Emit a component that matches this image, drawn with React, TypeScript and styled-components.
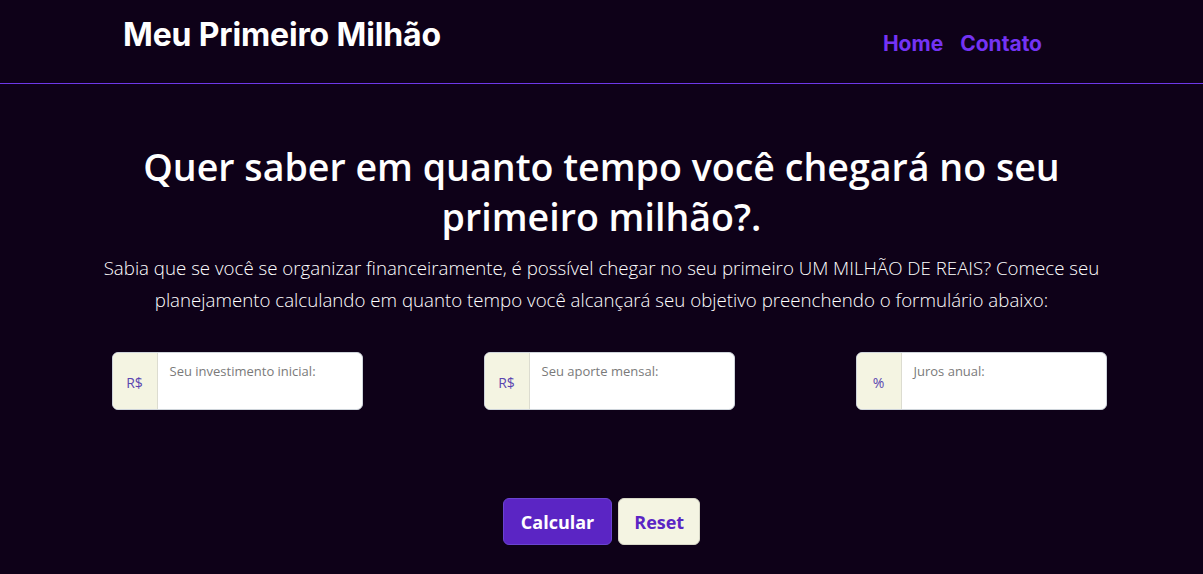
import React from "react";
import styled, { createGlobalStyle } from "styled-components";

const Global = createGlobalStyle`
  html, body { margin: 0; padding: 0; background: #0e0118; }
  * { box-sizing: border-box; }
`;

const Page = styled.div`
  min-height: 574px;
  background: #0e0118;
  font-family: "Open Sans", "Noto Sans", sans-serif;
  color: #fff;
`;

const Header = styled.header`
  height: 84px;
  border-bottom: 1px solid #6d38e8;
  display: flex;
  justify-content: space-between;
  align-items: flex-start;
  padding: 0 161px 0 123px;
`;

const Brand = styled.h1`
  margin: 0;
  padding-top: 17px;
  font-family: Inter, "Liberation Sans", sans-serif;
  font-size: 32px;
  font-weight: 700;
  letter-spacing: -0.15px;
  line-height: 36px;
  color: #fff;
`;

const Nav = styled.nav`
  display: flex;
  gap: 17px;
  padding-top: 31px;
`;

const NavLink = styled.a`
  font-family: Inter, "Liberation Sans", sans-serif;
  font-size: 21px;
  font-weight: 700;
  line-height: 26px;
  color: #7433f4;
  text-decoration: none;
`;

const Main = styled.main`
  width: 1000px;
  margin: 0 auto;
  padding-top: 58px;
  display: flex;
  flex-direction: column;
  align-items: center;
`;

const Title = styled.h2`
  margin: 0;
  max-width: 960px;
  text-align: center;
  font-size: 37.6px;
  font-weight: 600;
  line-height: 50px;
`;

const Lead = styled.p`
  margin: 10px -10px 0;
  text-align: center;
  font-size: 18.7px;
  font-weight: 300;
  line-height: 32px;
`;

const Fields = styled.div`
  width: 100%;
  display: flex;
  gap: 121px;
  padding-left: 10px;
  margin-top: 36px;
`;

const Group = styled.div`
  flex: none;
  width: 251px;
  height: 58px;
  display: flex;
  border: 1px solid #ced4da;
  border-radius: 6px;
  overflow: hidden;
  background: #fff;
`;

const Prefix = styled.span`
  width: 45px;
  flex: none;
  display: flex;
  align-items: center;
  justify-content: center;
  background: #f4f4e2;
  border-right: 1px solid #dcdcd0;
  color: #5a45b0;
  font-size: 14px;
  padding-top: 3px;
`;

const Field = styled.label`
  flex: 1;
  position: relative;
  display: block;
`;

const FieldLabel = styled.span`
  position: absolute;
  left: 12px;
  top: 9px;
  font-size: 13px;
  color: #7a7a7a;
`;

const Input = styled.input`
  width: 100%;
  height: 100%;
  border: none;
  outline: none;
  padding: 24px 12px 4px;
  font-size: 15px;
  background: transparent;
`;

const Actions = styled.div`
  display: flex;
  gap: 6px;
  margin-top: 88px;
`;

const Button = styled.button<{ $variant: "primary" | "light" }>`
  height: 47px;
  padding: 0 ${(p) => (p.$variant === "primary" ? "17px" : "15px")};
  border-radius: 6px;
  border: 1px solid ${(p) => (p.$variant === "primary" ? "#6a44d0" : "#d8d8c8")};
  background: ${(p) => (p.$variant === "primary" ? "#5b25c4" : "#f4f4e2")};
  color: ${(p) => (p.$variant === "primary" ? "#fff" : "#5b25c4")};
  font-family: "Open Sans", "Noto Sans", sans-serif;
  font-size: 18px;
  font-weight: 700;
  cursor: pointer;
`;

const fields = [
  { prefix: "R$", label: "Seu investimento inicial:" },
  { prefix: "R$", label: "Seu aporte mensal:" },
  { prefix: "%", label: "Juros anual:" },
];

export default function App() {
  return (
    <Page>
      <Global />
      <Header>
        <Brand>Meu Primeiro Milhão</Brand>
        <Nav>
          <NavLink href="#">Home</NavLink>
          <NavLink href="#">Contato</NavLink>
        </Nav>
      </Header>
      <Main>
        <Title>Quer saber em quanto tempo você chegará no seu primeiro milhão?.</Title>
        <Lead>
          Sabia que se você se organizar financeiramente, é possível chegar no seu primeiro UM MILHÃO DE REAIS? Comece seu
          planejamento calculando em quanto tempo você alcançará seu objetivo preenchendo o formulário abaixo:
        </Lead>
        <Fields>
          {fields.map((f) => (
            <Group key={f.label}>
              <Prefix>{f.prefix}</Prefix>
              <Field>
                <FieldLabel>{f.label}</FieldLabel>
                <Input type="text" />
              </Field>
            </Group>
          ))}
        </Fields>
        <Actions>
          <Button $variant="primary">Calcular</Button>
          <Button $variant="light">Reset</Button>
        </Actions>
      </Main>
    </Page>
  );
}
